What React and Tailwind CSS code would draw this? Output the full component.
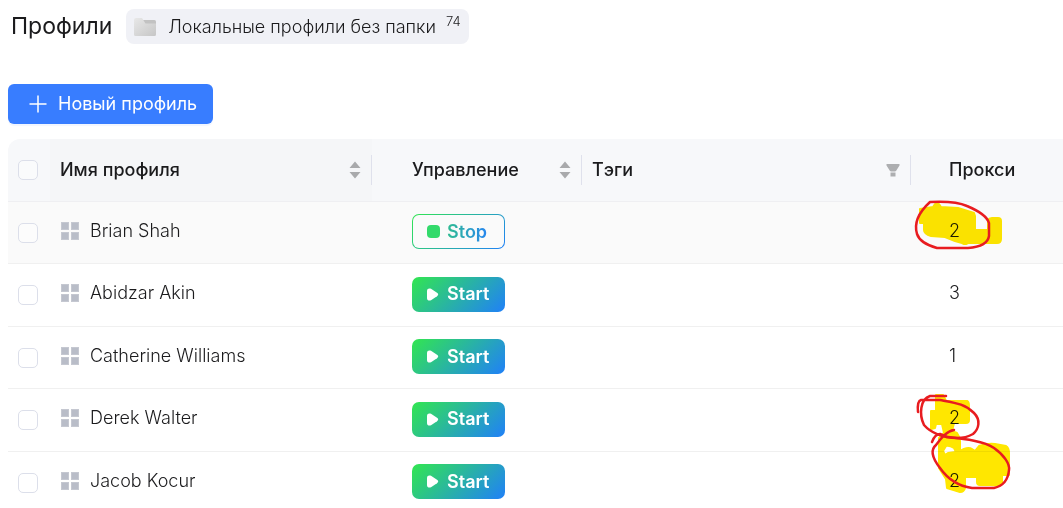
const profiles = [
  { name: 'Brian Shah', running: true, proxy: 2 },
  { name: 'Abidzar Akin', running: false, proxy: 3 },
  { name: 'Catherine Williams', running: false, proxy: 1 },
  { name: 'Derek Walter', running: false, proxy: 2 },
  { name: 'Jacob Kocur', running: false, proxy: 2 },
];

function FolderIcon() {
  return (
    <svg width="22" height="18" viewBox="0 0 22 18" aria-hidden="true">
      <defs>
        <linearGradient id="folder" x1="0" y1="0" x2="1" y2="1">
          <stop offset="0" stopColor="#e8e8e8" />
          <stop offset="1" stopColor="#c6c6c6" />
        </linearGradient>
      </defs>
      <path d="M8 2h12.500a1.500 1.500 0 0 1 1.500 1.500V9H8z" fill="#c2c2c2" />
      <path d="M0 2a2 2 0 0 1 2-2h6l3.500 5.500H22V16.500a1.500 1.500 0 0 1-1.500 1.500h-19A1.500 1.500 0 0 1 0 16.500z" fill="url(#folder)" />
    </svg>
  );
}

function WindowsIcon() {
  return (
    <svg className="shrink-0" width="18" height="18" viewBox="0 0 18 18" aria-hidden="true">
      <path d="M0 0h8v8H0zM10 0h8v8h-8zM0 10h8v8H0zM10 10h8v8h-8z" fill="#c5c8d1" />
      <path d="M1 1h6v6H1zM11 1h6v6h-6zM1 11h6v6H1zM11 11h6v6h-6z" fill="#b9bdc8" />
    </svg>
  );
}

function SortIcon() {
  return (
    <svg width="12" height="18" viewBox="0 0 12 18" fill="#a9aaac" aria-hidden="true">
      <path d="M6 0.500 11.500 7H.5zM6 17.500.5 11h11z" />
    </svg>
  );
}

function FilterIcon() {
  return (
    <svg width="14" height="13" viewBox="0 0 14 13" aria-hidden="true">
      <path d="M.5 0h13v1.500L10 7H4L.5 1.500zM4.500 9h5v3.500h-5z" fill="#adaeb0" />
      <path d="M4.500 7h5v2h-5z" fill="#d3d4d6" />
    </svg>
  );
}

function Check({ label }) {
  return (
    <input
      type="checkbox"
      aria-label={label}
      className="block size-5 appearance-none rounded-[5px] border border-[#dcdfea] bg-white/40 checked:bg-[#387dff]"
    />
  );
}

function RunButton({ running }) {
  if (running) {
    return (
      <button type="button" className="block h-[35px] w-[93px] rounded-[7px] bg-linear-135/srgb from-[#32e650] to-[#2080f8] p-px">
        <span className="flex h-full items-center gap-[7px] rounded-md bg-[#fafafa] pl-[14px] text-lg font-semibold">
          <span className="size-[13px] rounded bg-[#33da6b]" />
          <span className="bg-linear-to-r/srgb from-[#30bd91] to-[#2786ef] bg-clip-text text-transparent">Stop</span>
        </span>
      </button>
    );
  }
  return (
    <button type="button" className="flex h-[35px] w-[93px] items-center gap-2 rounded-[7px] bg-linear-135/srgb from-[#32e650] to-[#2080f8] pl-[15px] text-lg font-semibold text-white">
      <svg width="12" height="13" viewBox="0 0 12 13" fill="currentColor" aria-hidden="true">
        <path d="M0 3C0 .6 2 0 4 .8L10 4.800C11.600 5.900 11.600 7.100 10 8.200L4 12.200C2 13 0 12.400 0 10z" />
      </svg>
      Start
    </button>
  );
}

function HeaderCell({ title, pad, icon }) {
  return (
    <div className={`flex h-[30px] items-center justify-between border-r border-[#dfe1ec] pr-[10px] ${pad}`}>
      {title}
      <button type="button" aria-label={title}>{icon}</button>
    </div>
  );
}

function Marks() {
  return (
    <>
      <svg className="pointer-events-none absolute top-[51px] left-[902px] mix-blend-multiply" width="110" height="318" viewBox="910 190 110 318" aria-hidden="true">
        <g fill="#ffe700" stroke="#ffe700" strokeWidth="2" strokeLinejoin="round">
          <path d="M920 209 933 207 935 204H939L941 207 958 208 974 213 975 216V230H988V220Q989 218 992 218H998Q1001 218 1001 221V239Q1001 243 997 243H968L966 244H964L962 243 955 241 945 237 931 236Q924 234 924 230V223H920z" />
          <path fillRule="evenodd" d="M936 395H943L946 401H967Q969 402 969 406V420Q969 423 966 423H954L952 431 957 433Q960 437 960 441V451L964 449Q969 447 972 449L975 451 979 446Q988 443 995 444L1006 446Q1009 448 1009 453V475H1002V483Q999 486 991 485H980Q977 485 977 482V477H965V488Q964 492 960 492L947 488 946 479 939 468V438L944 433 942 424H936L935 428 931 429V411H936zM943 451 945 455 948 453 956 452 954 448Q949 445 946 446z" />
        </g>
      </svg>
      <svg className="pointer-events-none absolute top-[51px] left-[902px]" width="110" height="318" viewBox="910 190 110 318" fill="none" stroke="#e81c20" strokeWidth="2.500" strokeLinecap="round" strokeLinejoin="round" aria-hidden="true">
        <path d="M930 202C948 201 958 202 967 206C979 211 987 216 989 223V236C988 243 980 247 968 248H937C926 245 919 240 917 234C914 224 918 213 930 202" />
        <path d="M918 412Q917 401 921 400H940C956 403 965 404 974 413C981 420 979 429 973 434Q966 438 957 438C942 438 930 432 924 425C919 415 920 399 930 396L946 396" />
        <path d="M932 442Q935 434 940 434L947 437C965 439 984 441 994 448C1004 455 1010 464 1009 470C1008 481 1003 486 994 488H972C958 486 947 478 940 468C933 459 930 450 936 445C942 437 947 431 954 430" />
      </svg>
    </>
  );
}

export default function App() {
  return (
    <main className="h-screen overflow-hidden bg-white pl-2 font-['Inter','Liberation_Sans',sans-serif] text-[#1b1b1d]">
      <header className="flex items-center gap-[14px] pt-[9px] pl-[3px]">
        <h1 className="text-[23px] leading-[35px]">Профили</h1>
        <a href="#folder" className="flex h-[35px] items-center rounded-lg bg-[#f0f1f6] px-2 text-lg font-light">
          <FolderIcon />
          <span className="ml-3">Локальные профили без папки</span>
          <span className="ml-[10px] self-start text-[13px] leading-6">74</span>
        </a>
      </header>

      <button type="button" className="mt-10 flex h-10 items-center gap-[11px] rounded-md bg-[#387dff] pr-4 pl-5 text-lg text-white shadow-[0_2px_1px_#f1f6ff]">
        <svg width="19" height="19" viewBox="0 0 19 19" fill="none" stroke="currentColor" strokeWidth="1.500" aria-hidden="true">
          <path d="M10 .5v17M1.500 9h17" />
        </svg>
        Новый профиль
      </button>

      <section className="relative mt-[15px]">
        <table className="w-full table-fixed border-separate border-spacing-0 text-left text-lg font-light">
          <colgroup>
            <col className="w-[42px]" />
            <col className="w-[322px]" />
            <col className="w-[210px]" />
            <col className="w-[329px]" />
            <col />
          </colgroup>
          <thead>
            <tr className="h-[63px] bg-[#f7f8fa] *:border-b *:border-[#efeff2] *:p-0 *:font-medium">
              <th className="rounded-tl-xl">
                <div className="pl-[10px]"><Check label="Выбрать все" /></div>
              </th>
              <th className="bg-[#f5f6f8]"><HeaderCell title="Имя профиля" pad="pl-[10px]" icon={<SortIcon />} /></th>
              <th><HeaderCell title="Управление" pad="pl-10" icon={<SortIcon />} /></th>
              <th><HeaderCell title="Тэги" pad="pl-[10px]" icon={<FilterIcon />} /></th>
              <th><div className="pl-[38px]">Прокси</div></th>
            </tr>
          </thead>
          <tbody>
            {profiles.map((p) => (
              <tr key={p.name} className="first:bg-[#fafafa] odd:h-[62px] even:h-[63px] *:border-b *:border-[#f0f0f0] *:p-0">
                <td><div className="pl-[10px]"><Check label={p.name} /></div></td>
                <td>
                  <div className="flex items-center gap-[11px] pb-1 pl-[11px]">
                    <WindowsIcon />
                    {p.name}
                  </div>
                </td>
                <td><div className="pb-[2px] pl-10"><RunButton running={p.running} /></div></td>
                <td />
                <td><div className="pb-1 pl-[38px]">{p.proxy}</div></td>
              </tr>
            ))}
          </tbody>
        </table>
        <Marks />
      </section>
    </main>
  );
}
